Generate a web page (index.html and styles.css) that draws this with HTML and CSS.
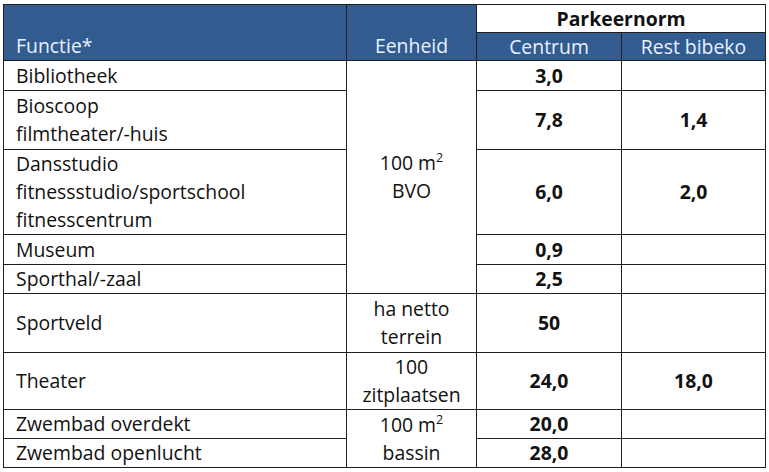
FILE: index.html
```html
<!DOCTYPE html>
<html lang="nl">
<head>
<meta charset="utf-8">
<title>Parkeernormen</title>
<link rel="stylesheet" href="styles.css">
</head>
<body>
<table class="norm">
  <colgroup>
    <col class="c-func">
    <col class="c-unit">
    <col class="c-cent">
    <col class="c-rest">
  </colgroup>
  <thead>
    <tr class="h1">
      <th class="hb left bottom" rowspan="2">Functie*</th>
      <th class="hb bottom" rowspan="2">Eenheid</th>
      <th class="hw" colspan="2">Parkeernorm</th>
    </tr>
    <tr class="h2">
      <th class="hb">Centrum</th>
      <th class="hb">Rest bibeko</th>
    </tr>
  </thead>
  <tbody>
    <tr class="r30">
      <td class="f">Bibliotheek</td>
      <td class="u" rowspan="5">100 m<sup>2</sup><br>BVO</td>
      <td class="n">3,0</td>
      <td class="n"></td>
    </tr>
    <tr class="r59">
      <td class="f">Bioscoop<br>filmtheater/-huis</td>
      <td class="n">7,8</td>
      <td class="n">1,4</td>
    </tr>
    <tr class="r85">
      <td class="f">Dansstudio<br>fitnessstudio/sportschool<br>fitnesscentrum</td>
      <td class="n">6,0</td>
      <td class="n">2,0</td>
    </tr>
    <tr class="r30">
      <td class="f">Museum</td>
      <td class="n">0,9</td>
      <td class="n"></td>
    </tr>
    <tr class="r29">
      <td class="f">Sporthal/-zaal</td>
      <td class="n">2,5</td>
      <td class="n"></td>
    </tr>
    <tr class="r59">
      <td class="f">Sportveld</td>
      <td class="u">ha netto<br>terrein</td>
      <td class="n">50</td>
      <td class="n"></td>
    </tr>
    <tr class="r57">
      <td class="f">Theater</td>
      <td class="u">100<br>zitplaatsen</td>
      <td class="n">24,0</td>
      <td class="n">18,0</td>
    </tr>
    <tr class="r29">
      <td class="f">Zwembad overdekt</td>
      <td class="u" rowspan="2">100 m<sup>2</sup><br>bassin</td>
      <td class="n">20,0</td>
      <td class="n"></td>
    </tr>
    <tr class="r29">
      <td class="f">Zwembad openlucht</td>
      <td class="n">28,0</td>
      <td class="n"></td>
    </tr>
  </tbody>
</table>
</body>
</html>
```

FILE: styles.css
```css
html, body {
  background: #ffffff;
}
body {
  margin: 4px 3px;
  font-family: "Open Sans", "Noto Sans", sans-serif;
  font-size: 19.4px;
  color: #111111;
}
.norm {
  border-collapse: collapse;
  table-layout: fixed;
  width: 762px;
  border: 1px solid #444444;
}
.c-func { width: 343px; }
.c-unit { width: 130px; }
.c-cent { width: 145px; }
.c-rest { width: 144px; }

th, td {
  border: 1px solid #1e1e1e;
  padding: 0;
  line-height: 28px;
  vertical-align: middle;
}
th {
  font-weight: normal;
  height: 27px;
  line-height: 26px;
}
.hb {
  background: #325c90;
  color: #e8f1ff;
  text-align: center;
}
.hb.bottom {
  vertical-align: bottom;
  padding-bottom: 1px;
}
.hb.left {
  text-align: left;
  padding-left: 12px;
}
.hw {
  background: #ffffff;
  color: #111111;
  font-weight: bold;
  text-align: center;
}

.f {
  text-align: left;
  padding-left: 12px;
}
.u {
  text-align: center;
}
.n {
  text-align: center;
  font-weight: bold;
}
sup {
  font-size: 12.5px;
  line-height: 0;
  vertical-align: 8px;
}
.r29 td { height: 28px; }
.r30 td { height: 29px; }
.r57 td { height: 56px; }
.r59 td { height: 58px; }
.r85 td { height: 84px; }
```
